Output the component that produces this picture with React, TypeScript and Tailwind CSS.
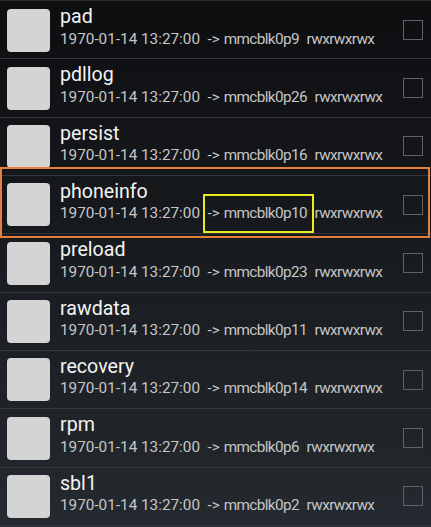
import React from "react";

type Entry = { name: string; target: string };

const entries: Entry[] = [
	{ name: "pad", target: "mmcblk0p9" },
	{ name: "pdllog", target: "mmcblk0p26" },
	{ name: "persist", target: "mmcblk0p16" },
	{ name: "phoneinfo", target: "mmcblk0p10" },
	{ name: "preload", target: "mmcblk0p23" },
	{ name: "rawdata", target: "mmcblk0p11" },
	{ name: "recovery", target: "mmcblk0p14" },
	{ name: "rpm", target: "mmcblk0p6" },
	{ name: "sbl1", target: "mmcblk0p2" },
];

const FileRow = ({ entry }: { entry: Entry }) => (
	<li className="flex h-[58.33px] border-b border-[#33363b] pl-[7px] pr-[8px]">
		<div className="mt-[7.5px] h-[43px] w-[43px] shrink-0 rounded-[4px] bg-[#d4d4d4]" />
		<div className="ml-[10px] flex-1 pt-[6px]">
			<div className="text-[19.6px] leading-[20px] text-[#f3f3f3]">{entry.name}</div>
			<div className="mt-[2.5px] whitespace-pre text-[15.3px] leading-[18px] text-[#c6c6c6]">
				{"1970-01-14 13:27:00  -> "}
				<span className="tracking-[-0.6px]">{entry.target}</span>
				{"  "}
				<span className="tracking-[-0.6px]">rwxrwxrwx</span>
			</div>
		</div>
		<div className="self-center h-[20px] w-[20px] shrink-0 border-[1.5px] border-[#5f6369]" />
	</li>
);

export default function App() {
	return (
		<div className="relative h-[527px] w-[431px] overflow-hidden bg-gradient-to-b from-[#0d0e10] to-[#252a30] font-['Roboto',sans-serif]">
			<ul className="border-t border-[#2a2c30]">
				{entries.map((e) => (
					<FileRow key={e.name} entry={e} />
				))}
			</ul>

			{/* highlight annotations */}
			<div className="absolute left-0 top-[167px] h-[71px] w-[430px] border-2 border-[#e5803a]" />
			<div className="absolute left-[203px] top-[194px] h-[39px] w-[111px] border-2 border-[#ecea1e]" />
		</div>
	);
}
